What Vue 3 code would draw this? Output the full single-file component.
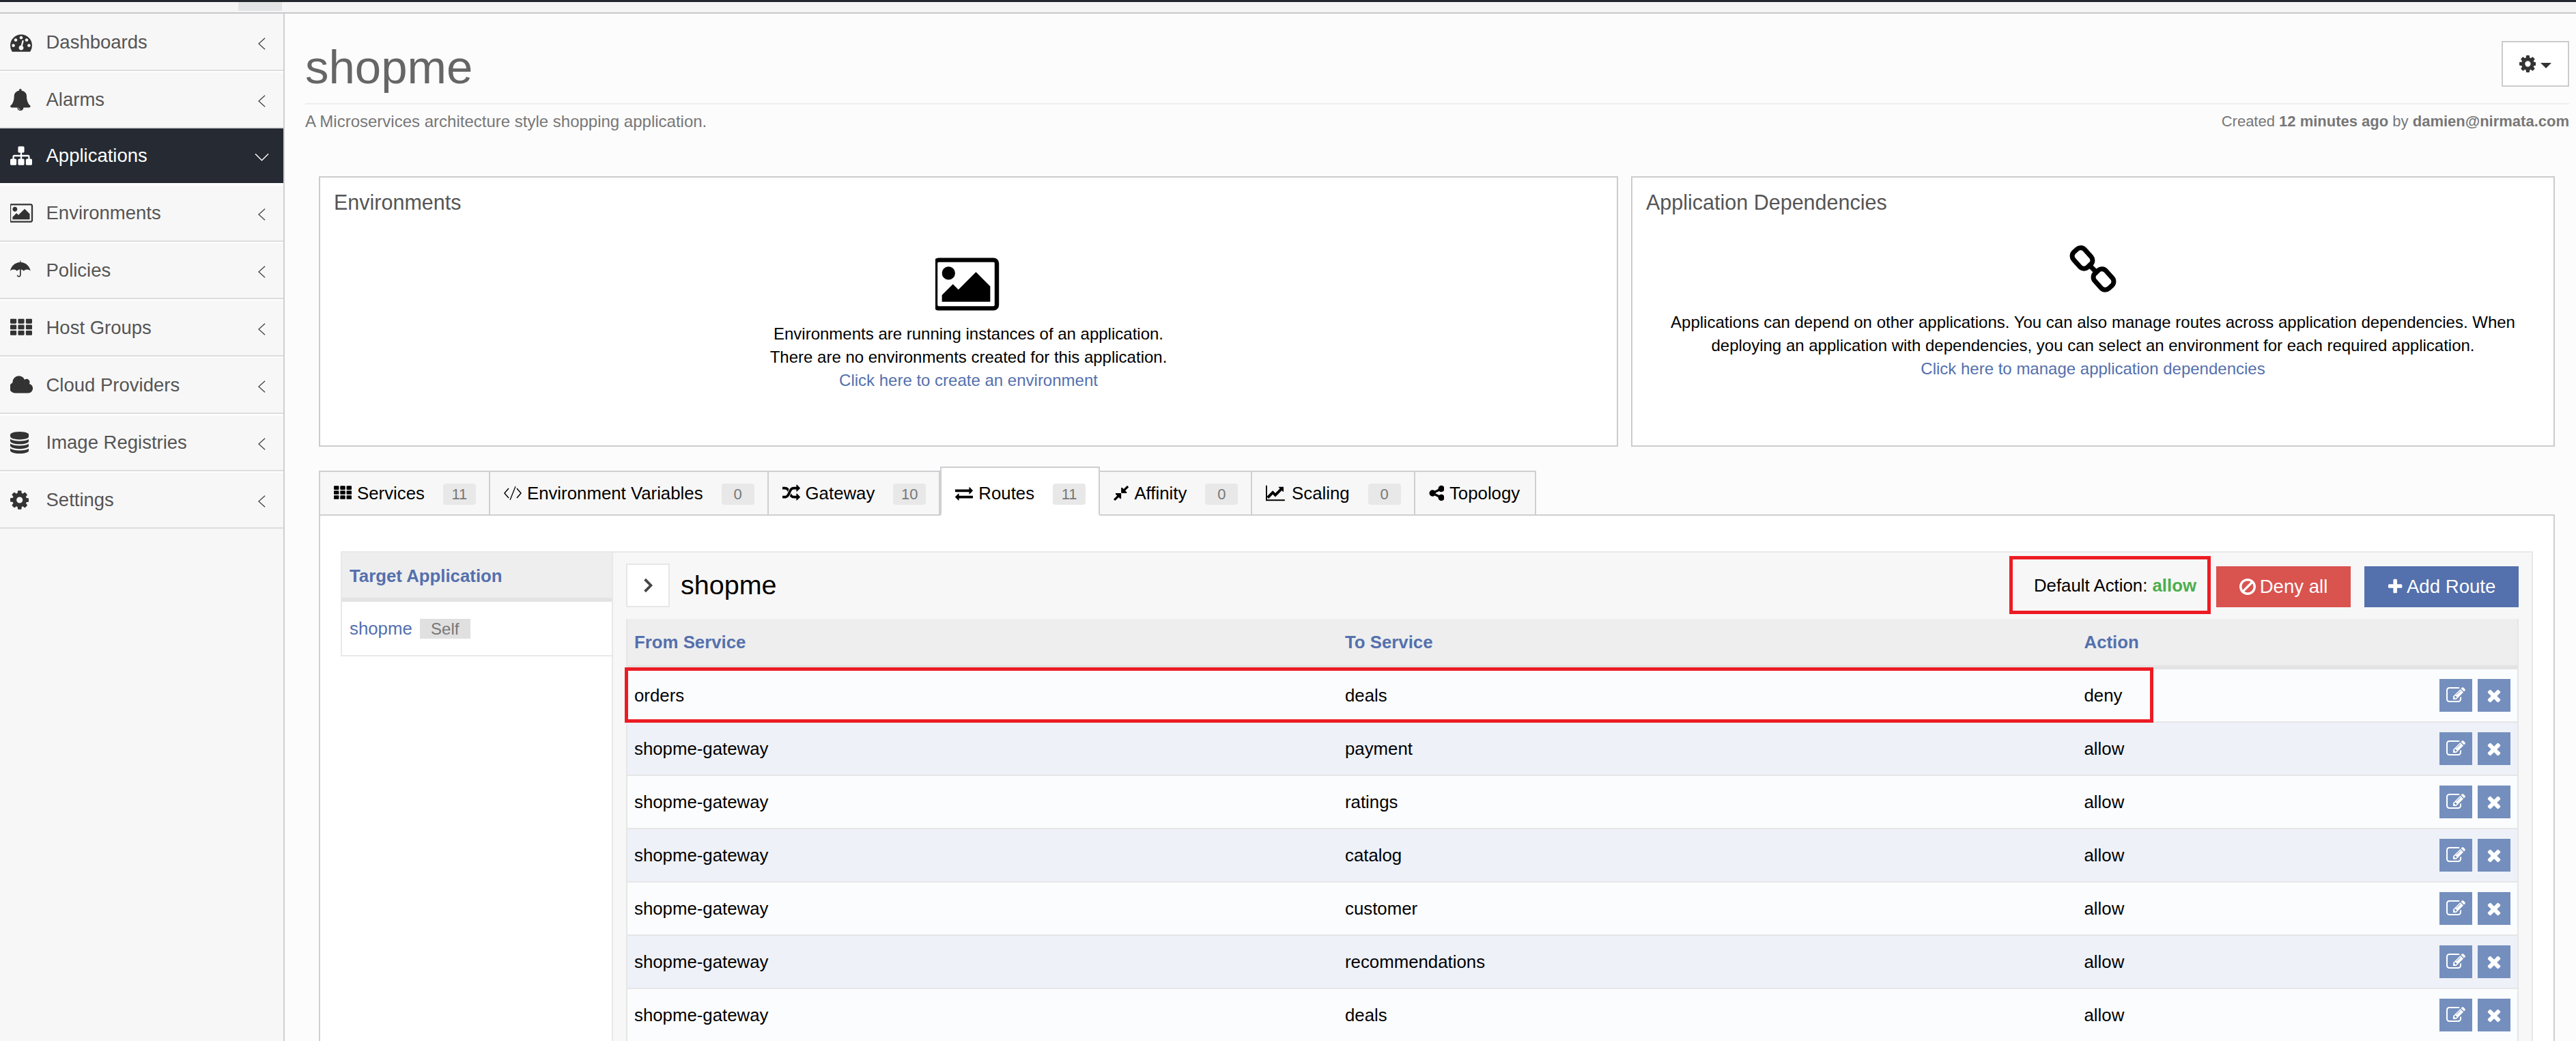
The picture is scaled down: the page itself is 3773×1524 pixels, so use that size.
<script setup>
import { h } from 'vue'

// FontAwesome 4 glyphs. x/w crop the empty side of the 1792 box so that icons sit left aligned
const glyphs = {
  dashboard: { x: 0, w: 1792, d: 'M384 1152q0-53-37.500-90.500t-90.500-37.500-90.500 37.500-37.500 90.500 37.500 90.500 90.500 37.500 90.500-37.500 37.500-90.500zm192-448q0-53-37.500-90.500t-90.500-37.500-90.500 37.500-37.500 90.500 37.500 90.500 90.500 37.500 90.500-37.500 37.500-90.500zm428 481l101-382q6-26-7.500-48.500t-38.500-29.500-48 6.500-30 39.500l-101 382q-60 5-107 43.500t-63 98.500q-20 77 20 146t117 89 146-20 89-117q16-60-6-117t-72-91zm660-33q0-53-37.500-90.500t-90.500-37.500-90.500 37.500-37.500 90.500 37.500 90.500 90.500 37.500 90.500-37.500 37.500-90.500zm-640-640q0-53-37.500-90.500t-90.500-37.500-90.500 37.500-37.500 90.500 37.500 90.500 90.500 37.500 90.500-37.500 37.500-90.500zm448 192q0-53-37.500-90.500t-90.500-37.500-90.500 37.500-37.500 90.500 37.500 90.500 90.500 37.500 90.500-37.500 37.500-90.500zm320 448q0 261-141 483-19 29-54 29h-1402q-35 0-54-29-141-221-141-483 0-182 71-348t191-286 286-191 348-71 348 71 286 191 191 286 71 348z' },
  bell: { x: 64, w: 1664, d: 'M912 1696q0-16-16-16-59 0-101.500-42.500t-42.500-101.500q0-16-16-16t-16 16q0 73 51.500 124.500t124.500 51.500q16 0 16-16zm816-288q0 52-38 90t-90 38h-448q0 106-75 181t-181 75-181-75-75-181h-448q-52 0-90-38t-38-90q50-42 91-88t85-119.500 74.500-158.500 50-206 19.500-260q0-152 117-282.500t307-158.500q-8-19-8-39 0-40 28-68t68-28 68 28 28 68q0 20-8 39 190 28 307 158.500t117 282.500q0 139 19.500 260t50 206 74.500 158.500 85 119.500 91 88z' },
  sitemap: { x: 0, w: 1792, d: 'M1792 1248v320q0 40-28 68t-68 28h-320q-40 0-68-28t-28-68v-320q0-40 28-68t68-28h96v-192h-512v192h96q40 0 68 28t28 68v320q0 40-28 68t-68 28h-320q-40 0-68-28t-28-68v-320q0-40 28-68t68-28h96v-192h-512v192h96q40 0 68 28t28 68v320q0 40-28 68t-68 28h-320q-40 0-68-28t-28-68v-320q0-40 28-68t68-28h96v-192q0-52 38-90t90-38h512v-192h-96q-40 0-68-28t-28-68v-320q0-40 28-68t68-28h320q40 0 68 28t28 68v320q0 40-28 68t-68 28h-96v192h512q52 0 90 38t38 90v192h96q40 0 68 28t28 68z' },
  picture: { x: 0, w: 1920, d: 'M576 576q0 80-56 136t-136 56-136-56-56-136 56-136 136-56 136 56 56 136zm1024 384v448h-1408v-192l320-320 160 160 512-512zm96-704h-1600q-13 0-22.500 9.500t-9.500 22.500v1216q0 13 9.500 22.500t22.500 9.500h1600q13 0 22.500-9.500t9.500-22.500v-1216q0-13-9.500-22.500t-22.500-9.500zm160 32v1216q0 66-47 113t-113 47h-1600q-66 0-113-47t-47-113v-1216q0-66 47-113t113-47h1600q66 0 113 47t47 113z' },
  umbrella: { x: 0, w: 1664, d: 'M800 96h64v128c420 20 740 320 800 720c-70-90-170-130-277-130s-207 40-278 130c-50-70-130-125-229-130v430c0 110-70 190-176 190c-90 0-160-70-160-160h96c0 40 24 70 64 70c50 0 80-40 80-100V814c-99 5-179 60-229 130c-71-90-171-130-278-130S70 854 0 944c60-400 380-700 800-720z' },
  th: { x: 0, w: 1792, d: 'M0 224q0-64 64-64h384q64 0 64 64v256q0 64-64 64H64q-64 0-64-64zM640 224q0-64 64-64h384q64 0 64 64v256q0 64-64 64H704q-64 0-64-64zM1280 224q0-64 64-64h384q64 0 64 64v256q0 64-64 64h-384q-64 0-64-64zM0 704q0-64 64-64h384q64 0 64 64v256q0 64-64 64H64q-64 0-64-64zM640 704q0-64 64-64h384q64 0 64 64v256q0 64-64 64H704q-64 0-64-64zM1280 704q0-64 64-64h384q64 0 64 64v256q0 64-64 64h-384q-64 0-64-64zM0 1184q0-64 64-64h384q64 0 64 64v256q0 64-64 64H64q-64 0-64-64zM640 1184q0-64 64-64h384q64 0 64 64v256q0 64-64 64H704q-64 0-64-64zM1280 1184q0-64 64-64h384q64 0 64 64v256q0 64-64 64h-384q-64 0-64-64z' },
  cloud: { x: 0, w: 1920, d: 'M1856 1152q0 159-112.500 271.500t-271.500 112.500h-1088q-185 0-316.500-131.500t-131.500-316.500q0-132 71-241.500t187-163.500q-2-28-2-43 0-212 150-362t362-150q158 0 286.500 88t187.500 230q70-62 166-62 106 0 181 75t75 181q0 75-41 138 129 30 213 134.500t84 239.500z' },
  database: { x: 0, w: 1536, d: 'M768 768q237 0 443-43t325-127v170q0 69-103 128t-280 93.500-385 34.500-385-34.500-280-93.500-103-128v-170q119 84 325 127t443 43zm0 768q237 0 443-43t325-127v170q0 69-103 128t-280 93.500-385 34.500-385-34.500-280-93.500-103-128v-170q119 84 325 127t443 43zm0-384q237 0 443-43t325-127v170q0 69-103 128t-280 93.500-385 34.500-385-34.500-280-93.500-103-128v-170q119 84 325 127t443 43zm0-1152q208 0 385 34.500t280 93.500 103 128v128q0 69-103 128t-280 93.500-385 34.500-385-34.500-280-93.500-103-128v-128q0-69 103-128t280-93.500 385-34.500z' },
  cog: { x: 128, w: 1536, d: 'M1152 896q0-106-75-181t-181-75-181 75-75 181 75 181 181 75 181-75 75-181zm512-109v222q0 12-8 23t-20 13l-185 28q-19 54-39 91 35 50 107 138 10 12 10 25t-9 23q-27 37-99 108t-94 71q-12 0-26-9l-138-108q-44 23-91 38-16 136-29 186-7 28-36 28h-222q-14 0-24.500-8.500t-11.500-21.500l-28-184q-49-16-90-37l-141 107q-10 9-25 9-14 0-25-11-126-114-165-168-7-10-7-23 0-12 8-23 15-21 51-66.500t54-70.500q-27-50-41-99l-183-27q-13-2-21-12.500t-8-23.500v-222q0-12 8-23t19-13l186-28q14-46 39-92-40-57-107-138-10-12-10-24 0-10 9-23 26-36 98.500-107.500t94.500-71.500q13 0 26 10l138 107q44-23 91-38 16-136 29-186 7-28 36-28h222q14 0 24.500 8.500t11.500 21.500l28 184q49 16 90 37l142-107q9-9 24-9 13 0 25 10 129 119 165 170 7 8 7 22 0 12-8 23-15 21-51 66.500t-54 70.500q26 50 41 98l183 28q13 2 21 12.500t8 23.500z' },
  exchange: { x: 0, w: 1792, d: 'M1792 1184v192q0 13-9.500 22.500t-22.500 9.500h-1376v192q0 13-9.500 22.500t-22.500 9.500q-12 0-24-10l-319-320q-9-9-9-22 0-14 9-23l320-320q9-9 23-9 13 0 22.500 9.500t9.500 22.500v192h1376q13 0 22.500 9.500t9.500 22.500zm0-544q0 14-9 23l-320 320q-9 9-23 9-13 0-22.500-9.500t-9.500-22.500v-192h-1376q-13 0-22.500-9.500t-9.500-22.500v-192q0-13 9.500-22.500t22.500-9.500h1376v-192q0-14 9-23t23-9q12 0 24 10l319 319q9 9 9 23z' },
  random: { x: 0, w: 1792, d: 'M666 481q-60 92-137 273-22-45-37-72.500t-40.500-63.500-51-56.500-63-35-81.500-14.500h-224q-14 0-23-9t-9-23v-192q0-14 9-23t23-9h224q250 0 410 225zm1126 799q0 14-9 23l-320 320q-9 9-23 9-13 0-22.500-9.500t-9.500-22.500v-192q-32 0-85 .5t-81 1-73-1-71-5-64-10.500-63-18.500-58-28.500-59-40-55-53.500-56-69.500q59-93 136-273 22 45 37 72.500t40.500 63.500 51 56.500 63 35 81.500 14.500h256v-192q0-14 9-23t23-9q12 0 24 10l319 319q9 9 9 23zm0-896q0 14-9 23l-320 320q-9 9-23 9-13 0-22.500-9.500t-9.500-22.500v-192h-256q-48 0-87 15t-69 45-51 61.500-45 77.500q-32 62-78 171-29 66-49.500 111t-54 105-64 100-74 83-90 68.500-106.500 42-128 16.500h-224q-14 0-23-9t-9-23v-192q0-14 9-23t23-9h224q48 0 87-15t69-45 51-61.500 45-77.500q32-62 78-171 29-66 49.500-111t54-105 64-100 74-83 90-68.500 106.500-42 128-16.500h256v-192q0-14 9-23t23-9q12 0 24 10l319 319q9 9 9 23z' },
  compress: { x: 128, w: 1536, d: 'M896 960v448q0 26-19 45t-45 19-45-19l-144-144-332 332q-10 10-23 10t-23-10l-114-114q-10-10-10-23t10-23l332-332-144-144q-19-19-19-45t19-45 45-19h448q26 0 45 19t19 45zm755-672q0 13-10 23l-332 332 144 144q19 19 19 45t-19 45-45 19h-448q-26 0-45-19t-19-45v-448q0-26 19-45t45-19 45 19l144 144 332-332q10-10 23-10t23 10l114 114q10 10 10 23z' },
  chart: { x: 0, w: 2048, d: 'M1920 1536v128h-1920v-1536h128v1408h1792zm-128-1248v435q0 21-19.500 29.500t-35.500-7.500l-121-121-633 633q-10 10-23 10t-23-10l-233-233-416 416-192-192 585-585q10-10 23-10t23 10l233 233 464-464-121-121q-16-16-7.500-35.500t29.500-19.500h435q14 0 23 9t9 23z' },
  share: { x: 0, w: 1536, d: 'M1248 1024q133 0 226.500 93.500t93.500 226.500-93.500 226.500-226.500 93.500-226.500-93.500-93.500-226.500q0-12 2-34l-360-180q-92 86-218 86-133 0-226.500-93.500t-93.500-226.500 93.500-226.500 226.500-93.500q126 0 218 86l360-180q-2-22-2-34 0-133 93.500-226.500t226.500-93.500 226.500 93.500 93.500 226.500-93.500 226.500-226.500 93.500q-126 0-218-86l-360 180q2 22 2 34t-2 34l360 180q92-86 218-86z' },
  code: { x: 0, w: 1792, d: 'M520 440L130 896l390 456-78 66L0 896l442-522zM1272 440l390 456-390 456 78 66 442-522-442-522zM1130 200l90 24-548 1368-90-24z' },
  ban: { x: 128, w: 1536, d: 'M1440 893q0-161-87-295l-754 753q137 89 297 89 111 0 211.500-43.500t173.500-116.500 116-174.500 43-212.500zm-999 299l755-754q-135-91-300-91-148 0-273 73t-198 199-73 274q0 162 89 299zm1223-299q0 157-61 300t-163.500 246-245 164-298.500 61-298.500-61-245-164-163.500-246-61-300 61-299.500 163.500-245.500 245-164 298.500-61 298.500 61 245 164 163.500 245.500 61 299.500z' },
  plus: { x: 128, w: 1536, d: 'M1600 736v192q0 40-28 68t-68 28h-416v416q0 40-28 68t-68 28h-192q-40 0-68-28t-28-68v-416h-416q-40 0-68-28t-28-68v-192q0-40 28-68t68-28h416v-416q0-40 28-68t68-28h192q40 0 68 28t28 68v416h416q40 0 68 28t28 68z' },
  times: { x: 0, w: 1792, d: 'M1490 1322q0 40-28 68l-136 136q-28 28-68 28t-68-28l-294-294-294 294q-28 28-68 28t-68-28l-136-136q-28-28-28-68t28-68l294-294-294-294q-28-28-28-68t28-68l136-136q28-28 68-28t68 28l294 294 294-294q28-28 68-28t68 28l136 136q28 28 28 68t-28 68l-294 294 294 294q28 28 28 68z' },
  edit: { x: 0, w: 1792, d: 'M888 1184l116-116-152-152-116 116v56h96v96h56zm440-720q-16-16-33 1l-350 350q-17 17-1 33t33-1l350-350q17-17 1-33zm80 594v190q0 119-84.500 203.500t-203.500 84.500h-832q-119 0-203.500-84.500t-84.500-203.500v-832q0-119 84.500-203.500t203.500-84.500h832q63 0 117 25 15 7 18 23 3 17-9 29l-49 49q-14 14-32 8-23-6-45-6h-832q-66 0-113 47t-47 113v832q0 66 47 113t113 47h832q66 0 113-47t47-113v-126q0-13 9-22l64-64q15-15 35-7t20 29zm-96-738l288 288-672 672h-288v-288zm444 132l-92 92-288-288 92-92q28-28 68-28t68 28l152 152q28 28 28 68t-28 68z' }
}

const Fa = (props) => {
  const g = glyphs[props.name]
  const size = props.size || 32
  return h('svg', {
    viewBox: `${g.x} 0 ${g.w} 1792`,
    width: (g.w / 1792) * size,
    height: size,
    fill: 'currentColor',
    class: 'fa'
  }, [h('path', { d: g.d })])
}
Fa.props = ['name', 'size']

const menu = [
  { label: 'Dashboards', icon: 'dashboard' },
  { label: 'Alarms', icon: 'bell' },
  { label: 'Applications', icon: 'sitemap', active: true },
  { label: 'Environments', icon: 'picture' },
  { label: 'Policies', icon: 'umbrella' },
  { label: 'Host Groups', icon: 'th' },
  { label: 'Cloud Providers', icon: 'cloud' },
  { label: 'Image Registries', icon: 'database' },
  { label: 'Settings', icon: 'cog' }
]

const tabs = [
  { label: 'Services', icon: 'th', count: 11 },
  { label: 'Environment Variables', icon: 'code', count: 0 },
  { label: 'Gateway', icon: 'random', count: 10 },
  { label: 'Routes', icon: 'exchange', count: 11, active: true },
  { label: 'Affinity', icon: 'compress', count: 0 },
  { label: 'Scaling', icon: 'chart', count: 0 },
  { label: 'Topology', icon: 'share' }
]

const routes = [
  { from: 'orders', to: 'deals', action: 'deny', marked: true },
  { from: 'shopme-gateway', to: 'payment', action: 'allow' },
  { from: 'shopme-gateway', to: 'ratings', action: 'allow' },
  { from: 'shopme-gateway', to: 'catalog', action: 'allow' },
  { from: 'shopme-gateway', to: 'customer', action: 'allow' },
  { from: 'shopme-gateway', to: 'recommendations', action: 'allow' },
  { from: 'shopme-gateway', to: 'deals', action: 'allow' }
]
</script>

<template>
  <div class="page">
    <div class="topbar"><span class="top-chip"></span></div>
    <div class="layout">
      <aside class="sidebar">
        <a v-for="m in menu" :key="m.label" class="nav-item" :class="{ active: m.active }">
          <span class="nav-icon"><Fa :name="m.icon" /></span>
          <span class="nav-label">{{ m.label }}</span>
          <svg v-if="m.active" class="nav-arrow down" viewBox="0 0 22 12"><path d="M1 1l10 10L21 1" /></svg>
          <svg v-else class="nav-arrow" viewBox="0 0 12 20"><path d="M11 1L1 10l10 9" /></svg>
        </a>
      </aside>

      <main class="main">
        <header class="head">
          <div class="title-row">
            <h1>shopme</h1>
            <button class="gear-btn"><Fa name="cog" :size="29" /><span class="caret"></span></button>
          </div>
          <div class="sub-row">
            <span>A Microservices architecture style shopping application.</span>
            <span class="created">Created <b>12 minutes ago</b> by <b>damien@nirmata.com</b></span>
          </div>
        </header>

        <div class="content">
          <div class="cards">
            <section class="card env">
              <h3>Environments</h3>
              <div class="card-body">
                <Fa name="picture" :size="90" class="card-icon" />
                <p>Environments are running instances of an application.</p>
                <p>There are no environments created for this application.</p>
                <a class="link">Click here to create an environment</a>
              </div>
            </section>
            <section class="card deps">
              <h3>Application Dependencies</h3>
              <div class="card-body">
                <svg class="chain" viewBox="0 0 70 70" width="70" height="70">
                  <rect x="8" y="4" width="22" height="30" rx="8" transform="rotate(-42 19 19)" />
                  <rect x="39" y="35" width="22" height="30" rx="8" transform="rotate(-42 50 50)" />
                  <path d="M27 27l15 15" />
                </svg>
                <p>Applications can depend on other applications. You can also manage routes across application dependencies. When<br />deploying an application with dependencies, you can select an environment for each required application.</p>
                <a class="link">Click here to manage application dependencies</a>
              </div>
            </section>
          </div>

          <nav class="tabs">
            <a v-for="t in tabs" :key="t.label" class="tab" :class="{ active: t.active }">
              <Fa :name="t.icon" :size="26" />
              <span class="tab-label">{{ t.label }}</span>
              <span v-if="t.count !== undefined" class="badge">{{ t.count }}</span>
            </a>
          </nav>

          <div class="tab-body">
            <div class="targets">
              <div class="targets-head">Target Application</div>
              <div class="target"><a class="link">shopme</a><span class="self">Self</span></div>
            </div>

            <div class="routes">
              <div class="routes-head">
                <button class="collapse"><svg viewBox="0 0 12 20" width="14" height="22"><path d="M2 2l8 8-8 8" /></svg></button>
                <h2>shopme</h2>
                <div class="default-action">
                  Default Action: <b>allow</b>
                  <span class="mark mark-default"></span>
                </div>
                <button class="btn danger"><Fa name="ban" :size="28" /> Deny all</button>
                <button class="btn primary"><Fa name="plus" :size="26" /> Add Route</button>
              </div>

              <div class="table">
                <div class="row thead">
                  <span>From Service</span><span>To Service</span><span>Action</span><span></span>
                </div>
                <div v-for="(r, i) in routes" :key="i" class="row" :class="{ alt: i % 2 === 1 }">
                  <span>{{ r.from }}</span>
                  <span>{{ r.to }}</span>
                  <span>{{ r.action }}</span>
                  <span class="ops">
                    <button class="op"><Fa name="edit" :size="28" /></button>
                    <button class="op"><Fa name="times" :size="28" /></button>
                  </span>
                  <span v-if="r.marked" class="mark mark-row"></span>
                </div>
              </div>
            </div>
          </div>
        </div>
      </main>
    </div>
  </div>
</template>

<style>
html, body {
  margin: 0;
  background: #fcfcfc;
}
</style>

<style scoped>
.page {
  height: 1524px;
  overflow: hidden;
  font-family: "Liberation Sans", Arial, sans-serif;
  font-size: 24px;
  color: #000;
  background: #fcfcfc;
  display: flex;
  flex-direction: column;
}

.topbar {
  height: 15px;
  flex: none;
  background: #f5f5f5;
  border-top: 3px solid #23272e;
  border-bottom: 2px solid #c8c8cc;
  padding-left: 349px;
}
.top-chip {
  display: block;
  width: 64px;
  height: 13px;
  background: #e3e4e6;
}

.layout {
  flex: 1;
  display: flex;
  min-height: 0;
}

.sidebar {
  width: 415px;
  flex: none;
  background: #f7f7f7;
  border-right: 2px solid #cfcfd2;
}
.nav-item {
  height: 80px;
  display: flex;
  align-items: center;
  padding: 0 26px 0 15px;
  border-top: 2px solid #fff;
  border-bottom: 2px solid #ddd;
  color: #555;
  font-size: 27.5px;
}
.nav-item:first-child {
  border-top-color: #f7f7f7;
}
.nav-item.active {
  border-top: none;
  border-bottom-color: #fff;
  background: #252a33;
  color: #fff;
}
.nav-icon {
  width: 52.5px;
  flex: none;
  display: flex;
  color: #333;
}
.active .nav-icon {
  color: #fff;
}
.nav-label {
  flex: 1;
}
.nav-arrow {
  width: 11px;
  height: 20px;
  margin-top: 4px;
  fill: none;
  stroke: #444;
  stroke-width: 1.5;
}
.nav-arrow.down {
  width: 21px;
  height: 12px;
  margin-right: -5px;
  stroke: #fff;
}

.main {
  flex: 1;
  min-width: 0;
}

.head {
  padding: 40px 10px 0 30px;
}
.title-row {
  height: 91px;
  display: flex;
  justify-content: space-between;
  border-bottom: 2px solid #eee;
}
.title-row h1 {
  margin: 0;
  font-size: 69px;
  font-weight: 400;
  line-height: 78px;
  color: #666;
}
.gear-btn {
  width: 99px;
  height: 67px;
  display: flex;
  align-items: center;
  justify-content: center;
  gap: 7px;
  background: #fff;
  border: 2px solid #ccc;
  color: #333;
  padding: 0;
}
.caret {
  border: 8px solid transparent;
  border-top-color: #333;
  border-bottom: none;
  margin-top: 4px;
}
.sub-row {
  display: flex;
  justify-content: space-between;
  height: 26px;
  padding-top: 12px;
  line-height: 26px;
  font-size: 24px;
  color: #777;
}
.created {
  font-size: 22px;
}

.content {
  padding: 67px 31px 0 50px;
}
.cards {
  display: flex;
  gap: 19px;
}
.card {
  height: 392px;
  background: #fff;
  border: 2px solid #ccc;
}
.card.env {
  width: 1899px;
}
.card.deps {
  flex: 1;
}
.card h3 {
  margin: 0;
  padding: 18px 20px 0;
  font-size: 30.5px;
  line-height: 36px;
  font-weight: 400;
  color: #555;
}
.card-body {
  text-align: center;
  line-height: 34px;
}
.card-body p {
  margin: 0;
}
.card-icon {
  display: block;
  margin: 57px auto 11px;
  color: #000;
}
.chain {
  display: block;
  margin: 45px auto 26px;
}
.chain rect,
.chain path {
  fill: none;
  stroke: #000;
  stroke-width: 7;
}
.link {
  color: #5470ad;
}

.tabs {
  display: flex;
  height: 64px;
  margin-top: 35px;
  border-bottom: 2px solid #cfcfd2;
  align-items: flex-end;
  position: relative;
}
.tab {
  height: 62px;
  margin-bottom: -2px;
  display: flex;
  align-items: center;
  padding: 0 19px 0 20px;
  background: #f7f7f7;
  border: 2px solid #cfcfd2;
  border-left: none;
  border-bottom: 2px solid #cfcfd2;
  font-size: 25.8px;
  gap: 8px;
}
.tab:first-child {
  border-left: 2px solid #cfcfd2;
}
.tab:last-child {
  padding-right: 22px;
}
.tab.active {
  padding-top: 6px;
  background: #fff;
  border-left: 2px solid #cfcfd2;
  border-bottom-color: #fff;
}
.badge {
  width: 48px;
  height: 31px;
  margin-left: 19px;
  margin-top: 2px;
  background: #e8e8e8;
  border-radius: 4px;
  color: #777;
  font-size: 22px;
  line-height: 31px;
  text-align: center;
}

.tab-body {
  display: flex;
  align-items: flex-start;
  padding: 52px 30px 0;
  background: #fff;
  border-left: 2px solid #cfcfd2;
  border-right: 2px solid #cfcfd2;
  font-size: 25.8px;
  height: 800px;
}
.targets {
  width: 397px;
  flex: none;
  height: 800px;
  box-sizing: border-box;
}
.targets-head {
  height: 66px;
  padding-left: 11px;
  line-height: 68px;
  background: #eee;
  border: 2px solid #e8e8e8;
  border-right: none;
  border-bottom: 6px solid #e3e3e3;
  color: #5470ad;
  font-weight: 700;
}
.target {
  height: 78px;
  display: flex;
  align-items: center;
  gap: 11px;
  padding-left: 11px;
  border-left: 2px solid #e8e8e8;
  border-bottom: 2px solid #e8e8e8;
}
.self {
  width: 74px;
  height: 29px;
  background: #e0e0e0;
  color: #777;
  font-size: 24px;
  line-height: 29px;
  text-align: center;
}

.routes {
  flex: 1;
  min-width: 0;
  background: #f7f7f7;
  border: 2px solid #e8e8e8;
  border-bottom: none;
  padding: 16px 19px 0;
  height: 800px;
}
.routes-head {
  height: 81px;
  display: flex;
  align-items: flex-start;
}
.collapse {
  width: 64px;
  height: 64px;
  display: flex;
  align-items: center;
  justify-content: center;
  background: #fff;
  border: 2px solid #e6e6e6;
  padding: 0;
}
.collapse path {
  fill: none;
  stroke: #444;
  stroke-width: 3.5;
}
.routes-head h2 {
  flex: 1;
  margin: 0 0 0 16px;
  font-size: 39.5px;
  font-weight: 400;
  line-height: 62px;
}
.default-action {
  position: relative;
  line-height: 64px;
  margin-right: 29px;
  font-size: 25.8px;
}
.default-action b {
  color: #4cae4c;
}
.mark {
  position: absolute;
  box-sizing: border-box;
  border: 5px solid #ed1c24;
  pointer-events: none;
}
.mark-default {
  left: -36px;
  top: -11px;
  width: 295px;
  height: 85px;
}
.btn {
  height: 60px;
  margin-top: 4px;
  border: none;
  color: #fff;
  font: inherit;
  font-size: 27.6px;
  display: flex;
  align-items: center;
  justify-content: center;
  gap: 6px;
  padding: 0;
}
.btn.danger {
  width: 197px;
  background: #d9534f;
  margin-right: 20px;
}
.btn.primary {
  width: 226px;
  background: #5470ad;
}

.table {
  border-left: 2px solid #e6e6e6;
  border-right: 2px solid #e6e6e6;
}
.row {
  position: relative;
  display: grid;
  grid-template-columns: 1041px 1082.5px 1fr auto;
  align-items: center;
  height: 76px;
  padding: 0 10px;
  background: #fbfcfe;
  border-bottom: 2px solid #e6e6e6;
  font-size: 25.8px;
}
.row.alt {
  background: #eef1f8;
}
.row.thead {
  height: 68px;
  background: #eee;
  border-bottom: 6px solid #e3e3e3;
  color: #5470ad;
  font-size: 25.8px;
  font-weight: 700;
}
.ops {
  display: flex;
  gap: 8px;
}
.op {
  width: 48px;
  height: 48px;
  display: flex;
  align-items: center;
  justify-content: center;
  background: #748fbd;
  border: none;
  padding: 0;
  color: #fff;
}
.mark-row {
  left: -4px;
  top: -3px;
  width: 2239px;
  height: 81px;
}
</style>
